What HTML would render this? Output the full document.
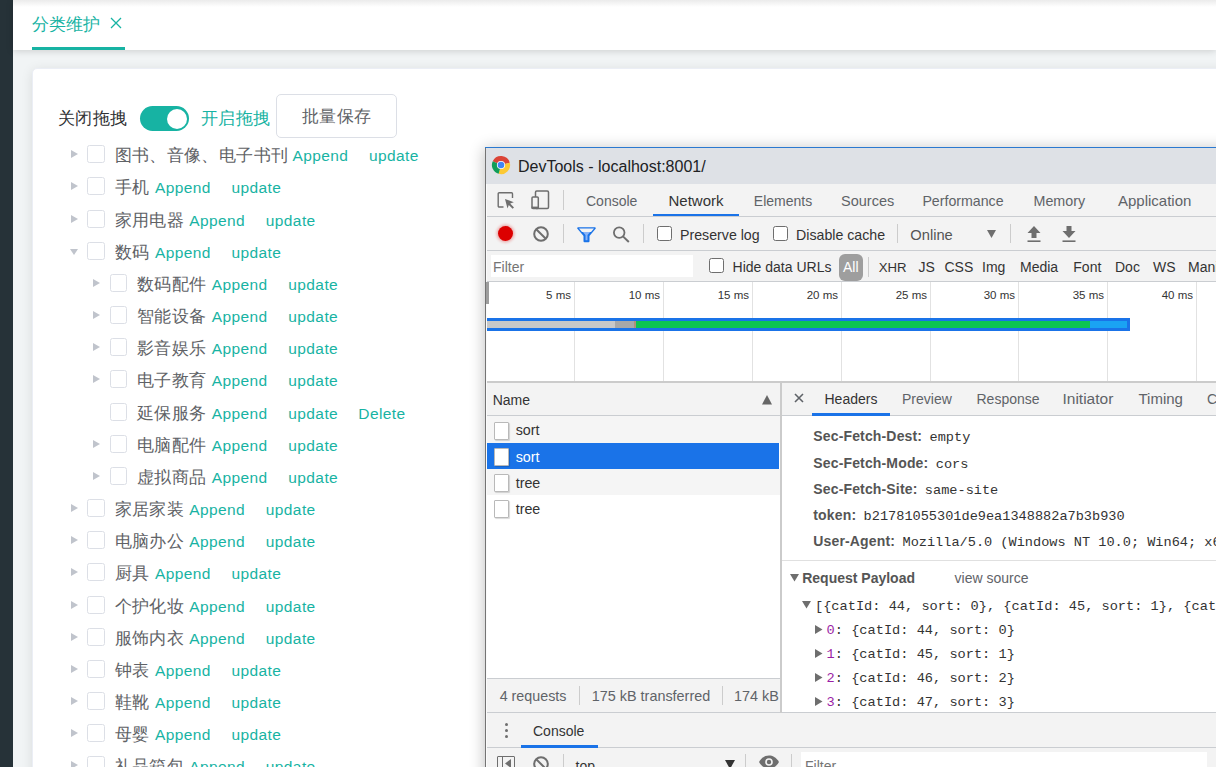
<!DOCTYPE html>
<html><head><meta charset="utf-8">
<style>
*{box-sizing:border-box}
html,body{margin:0;padding:0}
body{width:1216px;height:767px;overflow:hidden;position:relative;background:#f1f4f5;font-family:"Liberation Sans",sans-serif;}
.abs{position:absolute}
#side{position:absolute;left:0;top:0;width:13px;height:767px;background:#263238}
#top{position:absolute;left:13px;top:0;width:1203px;height:50px;background:#fff;box-shadow:0 1px 7px rgba(0,0,0,.16)}
#topsh{position:absolute;left:13px;top:0;width:1203px;height:7px;background:linear-gradient(#ebebeb,rgba(255,255,255,0))}
#tab{position:absolute;left:32px;top:13px;font-size:17px;color:#17b3a3;line-height:24px;white-space:nowrap}
#tabx{position:absolute;left:110px;top:17px;width:12px;height:12px}
#tabul{position:absolute;left:32px;top:47px;width:93px;height:3px;background:#17b3a3}
#card{position:absolute;left:32px;top:68px;width:1250px;height:760px;background:#fff;border:1px solid #ebeef5;border-radius:5px;box-shadow:0 2px 12px rgba(0,0,0,.1)}
.lbl{position:absolute;font-size:17px;letter-spacing:0.4px;line-height:24px;color:#606266;white-space:nowrap}
.lnk{position:absolute;font-size:15.5px;line-height:15.5px;letter-spacing:0.4px;color:#17b3a3;white-space:nowrap}
.cb{position:absolute;width:17.5px;height:17.5px;border:1px solid #dcdfe6;border-radius:2.5px;background:#fff}
.arr{position:absolute;width:0;height:0;border-left:7px solid #c0c4cc;border-top:4.5px solid transparent;border-bottom:4.5px solid transparent}
.arr.down{border-top:6px solid #c0c4cc;border-left:4.5px solid transparent;border-right:4.5px solid transparent;border-bottom:0}
#sw{position:absolute;left:140px;top:106px;width:49px;height:25px;border-radius:13px;background:#17b3a3}
#swk{position:absolute;left:167px;top:108.5px;width:20px;height:20px;border-radius:50%;background:#fff}
#btn{position:absolute;left:276px;top:94px;width:121px;height:44px;border:1px solid #dcdfe6;border-radius:5px;background:#fff}
/* devtools */
#dt{position:absolute;left:485px;top:147px;width:760px;height:640px;background:#fff;border-left:1px solid #8a8a8a;border-top:1px solid #1a73e8;box-shadow:0 0 18px rgba(0,0,0,.22)}
.t{position:absolute;white-space:nowrap}
.r{position:absolute}
.dtt{position:absolute;font-size:14.3px;line-height:18px;color:#333;white-space:nowrap}
</style></head><body>
<div id="side"></div>
<div id="top"></div>
<div id="topsh"></div>
<div id="tab">分类维护</div>
<svg id="tabx" viewBox="0 0 12 12"><path d="M1 1L11 11M11 1L1 11" stroke="#17b3a3" stroke-width="1.3"/></svg>
<div id="tabul"></div>
<div id="card"></div>
<div class="lbl" style="left:58px;top:107px;color:#303133">关闭拖拽</div>
<div id="sw"></div><div id="swk"></div>
<div class="lbl" style="left:201px;top:107px;color:#17b3a3">开启拖拽</div>
<div id="btn"></div>
<div class="lbl" style="left:302px;top:105px">批量保存</div>
<div class="arr" style="left:71px;top:150px"></div>
<div class="cb" style="left:87px;top:145px"></div>
<div class="lbl" style="left:114.5px;top:144px">图书、音像、电子书刊</div>
<div class="lnk" style="left:292.5px;top:147.7px">Append</div>
<div class="lnk" style="left:369.0px;top:147.7px">update</div>
<div class="arr" style="left:71px;top:182px"></div>
<div class="cb" style="left:87px;top:177px"></div>
<div class="lbl" style="left:114.5px;top:176px">手机</div>
<div class="lnk" style="left:154.9px;top:179.7px">Append</div>
<div class="lnk" style="left:231.4px;top:179.7px">update</div>
<div class="arr" style="left:71px;top:215px"></div>
<div class="cb" style="left:87px;top:210px"></div>
<div class="lbl" style="left:114.5px;top:209px">家用电器</div>
<div class="lnk" style="left:189.3px;top:212.7px">Append</div>
<div class="lnk" style="left:265.8px;top:212.7px">update</div>
<div class="arr down" style="left:69.5px;top:249px"></div>
<div class="cb" style="left:87px;top:242px"></div>
<div class="lbl" style="left:114.5px;top:241px">数码</div>
<div class="lnk" style="left:154.9px;top:244.7px">Append</div>
<div class="lnk" style="left:231.4px;top:244.7px">update</div>
<div class="arr" style="left:92.5px;top:279px"></div>
<div class="cb" style="left:109.5px;top:274px"></div>
<div class="lbl" style="left:137.0px;top:273px">数码配件</div>
<div class="lnk" style="left:211.8px;top:276.7px">Append</div>
<div class="lnk" style="left:288.3px;top:276.7px">update</div>
<div class="arr" style="left:92.5px;top:311px"></div>
<div class="cb" style="left:109.5px;top:306px"></div>
<div class="lbl" style="left:137.0px;top:305px">智能设备</div>
<div class="lnk" style="left:211.8px;top:308.7px">Append</div>
<div class="lnk" style="left:288.3px;top:308.7px">update</div>
<div class="arr" style="left:92.5px;top:343px"></div>
<div class="cb" style="left:109.5px;top:338px"></div>
<div class="lbl" style="left:137.0px;top:337px">影音娱乐</div>
<div class="lnk" style="left:211.8px;top:340.7px">Append</div>
<div class="lnk" style="left:288.3px;top:340.7px">update</div>
<div class="arr" style="left:92.5px;top:375px"></div>
<div class="cb" style="left:109.5px;top:370px"></div>
<div class="lbl" style="left:137.0px;top:369px">电子教育</div>
<div class="lnk" style="left:211.8px;top:372.7px">Append</div>
<div class="lnk" style="left:288.3px;top:372.7px">update</div>
<div class="cb" style="left:109.5px;top:403px"></div>
<div class="lbl" style="left:137.0px;top:402px">延保服务</div>
<div class="lnk" style="left:211.8px;top:405.7px">Append</div>
<div class="lnk" style="left:288.3px;top:405.7px">update</div>
<div class="lnk" style="left:358.3px;top:405.7px">Delete</div>
<div class="arr" style="left:92.5px;top:440px"></div>
<div class="cb" style="left:109.5px;top:435px"></div>
<div class="lbl" style="left:137.0px;top:434px">电脑配件</div>
<div class="lnk" style="left:211.8px;top:437.7px">Append</div>
<div class="lnk" style="left:288.3px;top:437.7px">update</div>
<div class="arr" style="left:92.5px;top:472px"></div>
<div class="cb" style="left:109.5px;top:467px"></div>
<div class="lbl" style="left:137.0px;top:466px">虚拟商品</div>
<div class="lnk" style="left:211.8px;top:469.7px">Append</div>
<div class="lnk" style="left:288.3px;top:469.7px">update</div>
<div class="arr" style="left:71px;top:504px"></div>
<div class="cb" style="left:87px;top:499px"></div>
<div class="lbl" style="left:114.5px;top:498px">家居家装</div>
<div class="lnk" style="left:189.3px;top:501.7px">Append</div>
<div class="lnk" style="left:265.8px;top:501.7px">update</div>
<div class="arr" style="left:71px;top:536px"></div>
<div class="cb" style="left:87px;top:531px"></div>
<div class="lbl" style="left:114.5px;top:530px">电脑办公</div>
<div class="lnk" style="left:189.3px;top:533.7px">Append</div>
<div class="lnk" style="left:265.8px;top:533.7px">update</div>
<div class="arr" style="left:71px;top:568px"></div>
<div class="cb" style="left:87px;top:563px"></div>
<div class="lbl" style="left:114.5px;top:562px">厨具</div>
<div class="lnk" style="left:154.9px;top:565.7px">Append</div>
<div class="lnk" style="left:231.4px;top:565.7px">update</div>
<div class="arr" style="left:71px;top:601px"></div>
<div class="cb" style="left:87px;top:596px"></div>
<div class="lbl" style="left:114.5px;top:595px">个护化妆</div>
<div class="lnk" style="left:189.3px;top:598.7px">Append</div>
<div class="lnk" style="left:265.8px;top:598.7px">update</div>
<div class="arr" style="left:71px;top:633px"></div>
<div class="cb" style="left:87px;top:628px"></div>
<div class="lbl" style="left:114.5px;top:627px">服饰内衣</div>
<div class="lnk" style="left:189.3px;top:630.7px">Append</div>
<div class="lnk" style="left:265.8px;top:630.7px">update</div>
<div class="arr" style="left:71px;top:665px"></div>
<div class="cb" style="left:87px;top:660px"></div>
<div class="lbl" style="left:114.5px;top:659px">钟表</div>
<div class="lnk" style="left:154.9px;top:662.7px">Append</div>
<div class="lnk" style="left:231.4px;top:662.7px">update</div>
<div class="arr" style="left:71px;top:697px"></div>
<div class="cb" style="left:87px;top:692px"></div>
<div class="lbl" style="left:114.5px;top:691px">鞋靴</div>
<div class="lnk" style="left:154.9px;top:694.7px">Append</div>
<div class="lnk" style="left:231.4px;top:694.7px">update</div>
<div class="arr" style="left:71px;top:729px"></div>
<div class="cb" style="left:87px;top:724px"></div>
<div class="lbl" style="left:114.5px;top:723px">母婴</div>
<div class="lnk" style="left:154.9px;top:726.7px">Append</div>
<div class="lnk" style="left:231.4px;top:726.7px">update</div>
<div class="arr" style="left:71px;top:761px"></div>
<div class="cb" style="left:87px;top:756px"></div>
<div class="lbl" style="left:114.5px;top:755px">礼品箱包</div>
<div class="lnk" style="left:189.3px;top:758.7px">Append</div>
<div class="lnk" style="left:265.8px;top:758.7px">update</div>
<div class="r" style="left:485px;top:147px;width:760px;height:640px;background:#fff;box-shadow:0 2px 14px 1px rgba(0,0,0,.24)"></div>
<div class="r" style="left:485px;top:147px;width:731px;height:1px;background:#2b79d0;"></div>
<div class="r" style="left:485px;top:148px;width:1px;height:619px;background:#747474;"></div>
<div class="r" style="left:486px;top:148px;width:730px;height:36px;background:#dee1e6;"></div>
<svg class="r" style="left:491px;top:155.3px" width="20" height="20" viewBox="0 0 20 20"><path d="M10 10L1.75 6.15A9.1 9.1 0 0 1 18.79 7.64Z" fill="#db4437"/><path d="M10 10L18.79 7.64A9.1 9.1 0 0 1 7.64 18.79Z" fill="#fcc934"/><path d="M10 10L7.64 18.79A9.1 9.1 0 0 1 1.75 6.15Z" fill="#109d58"/><circle cx="10" cy="10" r="4.1" fill="#fff"/><circle cx="10" cy="10" r="3.3" fill="#4285f4"/></svg>
<div class="t" style="left:518px;top:158.6px;font-size:16px;line-height:16px;color:#202124;font-weight:normal;font-family:'Liberation Sans',sans-serif;">DevTools - localhost:8001/</div>
<div class="r" style="left:486px;top:184px;width:730px;height:32px;background:#f3f3f3;"></div>
<div class="r" style="left:486px;top:216px;width:730px;height:1px;background:#cacdd1;"></div>
<svg class="r" style="left:497px;top:191px" width="19" height="19" viewBox="0 0 19 19">
<path d="M6.5 16H2.2a1 1 0 0 1-1-1V2.8a1 1 0 0 1 1-1h12.3a1 1 0 0 1 1 1V7" fill="none" stroke="#6e6e6e" stroke-width="1.4"/>
<path d="M8 8L16.8 11.2L13.2 12.6L17 16.4L15.6 17.8L11.8 14L10.5 17.5Z" fill="#6e6e6e"/>
</svg>
<svg class="r" style="left:530px;top:189px" width="21" height="22" viewBox="0 0 21 22">
<rect x="5.5" y="2" width="13" height="17.4" rx="1.2" fill="none" stroke="#6e6e6e" stroke-width="1.5"/>
<rect x="2" y="7.9" width="6.3" height="11.5" rx="1" fill="#f3f3f3" stroke="#6e6e6e" stroke-width="1.5"/>
<path d="M1.5 18.6H8.8" stroke="#6e6e6e" stroke-width="2"/>
</svg>
<div class="r" style="left:563px;top:190px;width:1px;height:20px;background:#ccc;"></div>
<div class="t" style="left:586px;top:194.1px;font-size:14px;line-height:14px;color:#5f6368;font-weight:normal;font-family:'Liberation Sans',sans-serif;">Console</div>
<div class="t" style="left:668.5px;top:193.3px;font-size:15px;line-height:15px;color:#333;font-weight:normal;font-family:'Liberation Sans',sans-serif;">Network</div>
<div class="t" style="left:753.8px;top:194.1px;font-size:14px;line-height:14px;color:#5f6368;font-weight:normal;font-family:'Liberation Sans',sans-serif;">Elements</div>
<div class="t" style="left:841px;top:193.7px;font-size:14.5px;line-height:14.5px;color:#5f6368;font-weight:normal;font-family:'Liberation Sans',sans-serif;">Sources</div>
<div class="t" style="left:922.4px;top:194.0px;font-size:14.2px;line-height:14.2px;color:#5f6368;font-weight:normal;font-family:'Liberation Sans',sans-serif;">Performance</div>
<div class="t" style="left:1033.5px;top:193.9px;font-size:14.3px;line-height:14.3px;color:#5f6368;font-weight:normal;font-family:'Liberation Sans',sans-serif;">Memory</div>
<div class="t" style="left:1118px;top:193.3px;font-size:15px;line-height:15px;color:#5f6368;font-weight:normal;font-family:'Liberation Sans',sans-serif;">Application</div>
<div class="r" style="left:653px;top:214px;width:86px;height:2px;background:#1a73e8;"></div>
<div class="r" style="left:486px;top:217px;width:730px;height:33px;background:#f3f3f3;"></div>
<div class="r" style="left:486px;top:250px;width:730px;height:1px;background:#cacdd1;"></div>
<div class="r" style="left:497.5px;top:225.5px;width:15px;height:15px;border-radius:50%;background:#dc0000;box-shadow:0 0 3px 1.5px rgba(220,0,0,.3)"></div>
<svg class="r" style="left:532px;top:225px" width="18" height="18" viewBox="0 0 18 18">
<circle cx="9" cy="9" r="6.8" fill="none" stroke="#6e6e6e" stroke-width="2"/>
<path d="M4.2 4.2L13.8 13.8" stroke="#6e6e6e" stroke-width="2"/>
</svg>
<div class="r" style="left:563px;top:224px;width:1px;height:19px;background:#ccc;"></div>
<svg class="r" style="left:577px;top:226.5px" width="19" height="16" viewBox="0 0 19 16">
<path d="M1.2 1.2H17.8L11.5 8.5V14.3H7.5V8.5Z" fill="#8ab4f8" stroke="#1a73e8" stroke-width="2" stroke-linejoin="round"/>
<path d="M2 1.5H17L14 5H5Z" fill="#f3f3f3"/>
</svg>
<svg class="r" style="left:612px;top:226px" width="18" height="17" viewBox="0 0 18 17">
<circle cx="7.2" cy="6.6" r="5.3" fill="none" stroke="#6e6e6e" stroke-width="1.8"/>
<path d="M11 10.4L16.8 16" stroke="#6e6e6e" stroke-width="2"/>
</svg>
<div class="r" style="left:643px;top:224px;width:1px;height:19px;background:#ccc;"></div>
<div class="r" style="left:657px;top:226px;width:15px;height:15px;border:1px solid #6e6e6e;border-radius:2.5px;background:#fff"></div>
<div class="t" style="left:680px;top:228.0px;font-size:14.2px;line-height:14.2px;color:#333;font-weight:normal;font-family:'Liberation Sans',sans-serif;">Preserve log</div>
<div class="r" style="left:773px;top:226px;width:15px;height:15px;border:1px solid #6e6e6e;border-radius:2.5px;background:#fff"></div>
<div class="t" style="left:796px;top:228.0px;font-size:14.2px;line-height:14.2px;color:#333;font-weight:normal;font-family:'Liberation Sans',sans-serif;">Disable cache</div>
<div class="r" style="left:897px;top:224px;width:1px;height:19px;background:#ccc;"></div>
<div class="t" style="left:910.3px;top:227.6px;font-size:14.7px;line-height:14.7px;color:#555;font-weight:normal;font-family:'Liberation Sans',sans-serif;">Online</div>
<svg class="r" style="left:986.5px;top:229.5px" width="9" height="8" viewBox="0 0 9 8"><path d="M0 0H9L4.5 8Z" fill="#6e6e6e"/></svg>
<div class="r" style="left:1010px;top:224px;width:1px;height:19px;background:#ccc;"></div>
<svg class="r" style="left:1026px;top:225px" width="16" height="18" viewBox="0 0 16 18">
<path d="M8 1L14.5 8H10.5V13H5.5V8H1.5Z" fill="#6e6e6e"/><path d="M1.5 16.2H14.5" stroke="#6e6e6e" stroke-width="1.6"/>
</svg>
<svg class="r" style="left:1061px;top:225px" width="16" height="18" viewBox="0 0 16 18">
<path d="M5.5 1H10.5V6H14.5L8 13L1.5 6H5.5Z" fill="#6e6e6e"/><path d="M1.5 16.2H14.5" stroke="#6e6e6e" stroke-width="1.6"/>
</svg>
<div class="r" style="left:486px;top:251px;width:730px;height:30px;background:#f3f3f3;"></div>
<div class="r" style="left:486px;top:281px;width:730px;height:1px;background:#cacdd1;"></div>
<div class="r" style="left:491px;top:255px;width:202px;height:22px;background:#fff;"></div>
<div class="t" style="left:493px;top:260.1px;font-size:14px;line-height:14px;color:#757575;font-weight:normal;font-family:'Liberation Sans',sans-serif;">Filter</div>
<div class="r" style="left:709px;top:258px;width:15px;height:15px;border:1px solid #6e6e6e;border-radius:2.5px;background:#fff"></div>
<div class="t" style="left:732.6px;top:260.1px;font-size:14px;line-height:14px;color:#333;font-weight:normal;font-family:'Liberation Sans',sans-serif;">Hide data URLs</div>
<div class="r" style="left:838.5px;top:254px;width:24px;height:27px;border-radius:6px;background:#9e9e9e"></div>
<div class="t" style="left:843px;top:260.1px;font-size:14px;line-height:14px;color:#fff;font-weight:normal;font-family:'Liberation Sans',sans-serif;">All</div>
<div class="r" style="left:868px;top:257px;width:1px;height:20px;background:#ccc;"></div>
<div class="t" style="left:878.7px;top:260.8px;font-size:13.2px;line-height:13.2px;color:#333;font-weight:normal;font-family:'Liberation Sans',sans-serif;">XHR</div>
<div class="t" style="left:918.4px;top:260.1px;font-size:14px;line-height:14px;color:#333;font-weight:normal;font-family:'Liberation Sans',sans-serif;">JS</div>
<div class="t" style="left:944.5px;top:260.1px;font-size:14px;line-height:14px;color:#333;font-weight:normal;font-family:'Liberation Sans',sans-serif;">CSS</div>
<div class="t" style="left:982px;top:260.1px;font-size:14px;line-height:14px;color:#333;font-weight:normal;font-family:'Liberation Sans',sans-serif;">Img</div>
<div class="t" style="left:1020px;top:260.1px;font-size:14px;line-height:14px;color:#333;font-weight:normal;font-family:'Liberation Sans',sans-serif;">Media</div>
<div class="t" style="left:1073.3px;top:260.1px;font-size:14px;line-height:14px;color:#333;font-weight:normal;font-family:'Liberation Sans',sans-serif;">Font</div>
<div class="t" style="left:1115px;top:260.1px;font-size:14px;line-height:14px;color:#333;font-weight:normal;font-family:'Liberation Sans',sans-serif;">Doc</div>
<div class="t" style="left:1153px;top:260.1px;font-size:14px;line-height:14px;color:#333;font-weight:normal;font-family:'Liberation Sans',sans-serif;">WS</div>
<div class="t" style="left:1188px;top:260.1px;font-size:14px;line-height:14px;color:#333;font-weight:normal;font-family:'Liberation Sans',sans-serif;">Manifest</div>
<div class="r" style="left:486px;top:282px;width:730px;height:99px;background:#fff;"></div>
<div class="r" style="left:574px;top:282px;width:1px;height:99px;background:#e2e2e2;"></div>
<div class="t" style="left:571px;top:290.3px;font-size:11.5px;line-height:11.5px;color:#333;font-weight:normal;font-family:'Liberation Sans',sans-serif;transform:translateX(-100%)">5 ms</div>
<div class="r" style="left:663px;top:282px;width:1px;height:99px;background:#e2e2e2;"></div>
<div class="t" style="left:660px;top:290.3px;font-size:11.5px;line-height:11.5px;color:#333;font-weight:normal;font-family:'Liberation Sans',sans-serif;transform:translateX(-100%)">10 ms</div>
<div class="r" style="left:752px;top:282px;width:1px;height:99px;background:#e2e2e2;"></div>
<div class="t" style="left:749px;top:290.3px;font-size:11.5px;line-height:11.5px;color:#333;font-weight:normal;font-family:'Liberation Sans',sans-serif;transform:translateX(-100%)">15 ms</div>
<div class="r" style="left:841px;top:282px;width:1px;height:99px;background:#e2e2e2;"></div>
<div class="t" style="left:838px;top:290.3px;font-size:11.5px;line-height:11.5px;color:#333;font-weight:normal;font-family:'Liberation Sans',sans-serif;transform:translateX(-100%)">20 ms</div>
<div class="r" style="left:930px;top:282px;width:1px;height:99px;background:#e2e2e2;"></div>
<div class="t" style="left:927px;top:290.3px;font-size:11.5px;line-height:11.5px;color:#333;font-weight:normal;font-family:'Liberation Sans',sans-serif;transform:translateX(-100%)">25 ms</div>
<div class="r" style="left:1018px;top:282px;width:1px;height:99px;background:#e2e2e2;"></div>
<div class="t" style="left:1015px;top:290.3px;font-size:11.5px;line-height:11.5px;color:#333;font-weight:normal;font-family:'Liberation Sans',sans-serif;transform:translateX(-100%)">30 ms</div>
<div class="r" style="left:1107px;top:282px;width:1px;height:99px;background:#e2e2e2;"></div>
<div class="t" style="left:1104px;top:290.3px;font-size:11.5px;line-height:11.5px;color:#333;font-weight:normal;font-family:'Liberation Sans',sans-serif;transform:translateX(-100%)">35 ms</div>
<div class="r" style="left:1196px;top:282px;width:1px;height:99px;background:#e2e2e2;"></div>
<div class="t" style="left:1193px;top:290.3px;font-size:11.5px;line-height:11.5px;color:#333;font-weight:normal;font-family:'Liberation Sans',sans-serif;transform:translateX(-100%)">40 ms</div>
<div class="r" style="left:486px;top:282px;width:3px;height:22px;background:#9d9d9d;"></div>
<div class="r" style="left:486px;top:318px;width:644px;height:13px;background:#1a73e8;"></div>
<div class="r" style="left:486px;top:321px;width:129px;height:7px;background:#c8c8c8;"></div>
<div class="r" style="left:615px;top:321px;width:19px;height:7px;background:#a8a8a8;"></div>
<div class="r" style="left:634px;top:321px;width:2px;height:7px;background:#b0907a;"></div>
<div class="r" style="left:636px;top:321px;width:454px;height:7px;background:#0cc451;"></div>
<div class="r" style="left:1090px;top:321px;width:37px;height:7px;background:#1aa3f3;"></div>
<div class="r" style="left:486px;top:381px;width:730px;height:2px;background:#cbcbcb;"></div>
<div class="r" style="left:486px;top:383px;width:294px;height:32px;background:#f3f3f3;"></div>
<div class="r" style="left:486px;top:415px;width:294px;height:1px;background:#cacdd1;"></div>
<div class="t" style="left:492.7px;top:393.1px;font-size:14px;line-height:14px;color:#333;font-weight:normal;font-family:'Liberation Sans',sans-serif;">Name</div>
<svg class="r" style="left:762px;top:394.5px" width="10" height="10" viewBox="0 0 10 10"><path d="M5 0L10 9.5H0Z" fill="#666"/></svg>
<div class="r" style="left:486px;top:416px;width:294px;height:27px;background:#f5f5f5;"></div>
<div class="r" style="left:486px;top:443px;width:293px;height:26px;background:#1a73e8;"></div>
<div class="r" style="left:486px;top:469px;width:294px;height:26px;background:#f5f5f5;"></div>
<div class="r" style="left:486px;top:495px;width:294px;height:184px;background:#fff;"></div>
<div class="r" style="left:494px;top:421.5px;width:15px;height:18px;border:1px solid #b9b9b9;border-radius:1px;background:#fff;box-shadow:1px 1px 1px rgba(0,0,0,.15)"></div>
<div class="t" style="left:515.7px;top:423.4px;font-size:14.3px;line-height:14.3px;color:#333;font-weight:normal;font-family:'Liberation Sans',sans-serif;">sort</div>
<div class="r" style="left:494px;top:447.7px;width:15px;height:18px;border:1px solid #b9b9b9;border-radius:1px;background:#fff;box-shadow:1px 1px 1px rgba(0,0,0,.15)"></div>
<div class="t" style="left:515.7px;top:449.6px;font-size:14.3px;line-height:14.3px;color:#fff;font-weight:normal;font-family:'Liberation Sans',sans-serif;">sort</div>
<div class="r" style="left:494px;top:473.9px;width:15px;height:18px;border:1px solid #b9b9b9;border-radius:1px;background:#fff;box-shadow:1px 1px 1px rgba(0,0,0,.15)"></div>
<div class="t" style="left:515.7px;top:475.8px;font-size:14.3px;line-height:14.3px;color:#333;font-weight:normal;font-family:'Liberation Sans',sans-serif;">tree</div>
<div class="r" style="left:494px;top:500.1px;width:15px;height:18px;border:1px solid #b9b9b9;border-radius:1px;background:#fff;box-shadow:1px 1px 1px rgba(0,0,0,.15)"></div>
<div class="t" style="left:515.7px;top:502.0px;font-size:14.3px;line-height:14.3px;color:#333;font-weight:normal;font-family:'Liberation Sans',sans-serif;">tree</div>
<div class="r" style="left:486px;top:678px;width:294px;height:1px;background:#cacdd1;"></div>
<div class="r" style="left:486px;top:679px;width:294px;height:33px;background:#f3f3f3;"></div>
<div class="r" style="left:486px;top:712px;width:294px;height:1px;background:#cacdd1;"></div>
<div class="t" style="left:499.7px;top:688.9px;font-size:14.3px;line-height:14.3px;color:#5f6368;font-weight:normal;font-family:'Liberation Sans',sans-serif;">4 requests</div>
<div class="r" style="left:579px;top:686px;width:1px;height:19px;background:#ccc;"></div>
<div class="t" style="left:591.8px;top:688.8px;font-size:14.4px;line-height:14.4px;color:#5f6368;font-weight:normal;font-family:'Liberation Sans',sans-serif;">175 kB transferred</div>
<div class="r" style="left:722px;top:686px;width:1px;height:19px;background:#ccc;"></div>
<div class="t" style="left:734px;top:688.8px;font-size:14.4px;line-height:14.4px;color:#5f6368;font-weight:normal;font-family:'Liberation Sans',sans-serif;">174 kB</div>
<div class="r" style="left:780px;top:383px;width:2px;height:330px;background:#cbcbcb;"></div>
<div class="r" style="left:782px;top:383px;width:434px;height:32px;background:#f3f3f3;"></div>
<div class="r" style="left:782px;top:415px;width:434px;height:1px;background:#cacdd1;"></div>
<svg class="r" style="left:793.5px;top:393px" width="10" height="10" viewBox="0 0 10 10"><path d="M1 1L9 9M9 1L1 9" stroke="#5f6368" stroke-width="1.6"/></svg>
<div class="t" style="left:824.5px;top:392.1px;font-size:14px;line-height:14px;color:#333;font-weight:normal;font-family:'Liberation Sans',sans-serif;">Headers</div>
<div class="t" style="left:902px;top:392.1px;font-size:14px;line-height:14px;color:#5f6368;font-weight:normal;font-family:'Liberation Sans',sans-serif;">Preview</div>
<div class="t" style="left:976.5px;top:392.1px;font-size:14px;line-height:14px;color:#5f6368;font-weight:normal;font-family:'Liberation Sans',sans-serif;">Response</div>
<div class="t" style="left:1062.5px;top:390.9px;font-size:15.5px;line-height:15.5px;color:#5f6368;font-weight:normal;font-family:'Liberation Sans',sans-serif;">Initiator</div>
<div class="t" style="left:1138.5px;top:391.3px;font-size:15px;line-height:15px;color:#5f6368;font-weight:normal;font-family:'Liberation Sans',sans-serif;">Timing</div>
<div class="t" style="left:1207px;top:392.1px;font-size:14px;line-height:14px;color:#5f6368;font-weight:normal;font-family:'Liberation Sans',sans-serif;">Cookies</div>
<div class="r" style="left:812px;top:413px;width:78px;height:3px;background:#1a73e8;"></div>
<div class="r" style="left:782px;top:416px;width:434px;height:297px;background:#fff;"></div>
<div class="t" style="left:813.3px;top:428.0px;font-size:14px;line-height:16px;color:#333;white-space:nowrap"><b style="color:#555;letter-spacing:0.15px">Sec-Fetch-Dest:</b> <span style="font-family:'Liberation Mono',monospace;font-size:13.6px;color:#333;margin-left:3.5px">empty</span></div>
<div class="t" style="left:813.3px;top:454.5px;font-size:14px;line-height:16px;color:#333;white-space:nowrap"><b style="color:#555;letter-spacing:0.15px">Sec-Fetch-Mode:</b> <span style="font-family:'Liberation Mono',monospace;font-size:13.6px;color:#333;margin-left:3.5px">cors</span></div>
<div class="t" style="left:813.3px;top:480.5px;font-size:14px;line-height:16px;color:#333;white-space:nowrap"><b style="color:#555;letter-spacing:0.15px">Sec-Fetch-Site:</b> <span style="font-family:'Liberation Mono',monospace;font-size:13.6px;color:#333;margin-left:3.5px">same-site</span></div>
<div class="t" style="left:813.3px;top:506.5px;font-size:14px;line-height:16px;color:#333;white-space:nowrap"><b style="color:#555;letter-spacing:0.15px">token:</b> <span style="font-family:'Liberation Mono',monospace;font-size:13.6px;color:#333;margin-left:3.5px">b21781055301de9ea1348882a7b3b930</span></div>
<div class="t" style="left:813.3px;top:532.5px;font-size:14px;line-height:16px;color:#333;white-space:nowrap"><b style="color:#555;letter-spacing:0.15px">User-Agent:</b> <span style="font-family:'Liberation Mono',monospace;font-size:13.6px;color:#333;margin-left:3.5px">Mozilla/5.0 (Windows NT 10.0; Win64; x64) AppleWebKit</span></div>
<div class="r" style="left:782px;top:560px;width:434px;height:1px;background:#e0e0e0;"></div>
<svg class="r" style="left:789.5px;top:574px" width="9" height="8" viewBox="0 0 9 8"><path d="M0 0H9L4.5 7.5Z" fill="#6e6e6e"/></svg>
<div class="t" style="left:802.2px;top:571.1px;font-size:14px;line-height:14px;color:#555;font-weight:normal;font-family:'Liberation Sans',sans-serif;"><b>Request Payload</b></div>
<div class="t" style="left:954.6px;top:571.1px;font-size:14px;line-height:14px;color:#5f6368;font-weight:normal;font-family:'Liberation Sans',sans-serif;">view source</div>
<svg class="r" style="left:801.5px;top:601px" width="9" height="8" viewBox="0 0 9 8"><path d="M0 0H9L4.5 7.5Z" fill="#6e6e6e"/></svg>
<div class="t" style="left:815px;top:600.4px;font-size:13.65px;line-height:13.65px;color:#333;font-weight:normal;font-family:'Liberation Mono',monospace;">[{catId: 44, sort: 0}, {catId: 45, sort: 1}, {catId: 46, sort: 2}]</div>
<svg class="r" style="left:815px;top:624.5px" width="8" height="9" viewBox="0 0 8 9"><path d="M0 0L7.5 4.5L0 9Z" fill="#6e6e6e"/></svg>
<div class="t" style="left:826.6px;top:624.4px;font-size:13.65px;line-height:13.65px;color:#333;font-weight:normal;font-family:'Liberation Mono',monospace;"><span style="color:#9b1fa6">0</span>: {catId: 44, sort: 0}</div>
<svg class="r" style="left:815px;top:648.5px" width="8" height="9" viewBox="0 0 8 9"><path d="M0 0L7.5 4.5L0 9Z" fill="#6e6e6e"/></svg>
<div class="t" style="left:826.6px;top:648.4px;font-size:13.65px;line-height:13.65px;color:#333;font-weight:normal;font-family:'Liberation Mono',monospace;"><span style="color:#9b1fa6">1</span>: {catId: 45, sort: 1}</div>
<svg class="r" style="left:815px;top:672.5px" width="8" height="9" viewBox="0 0 8 9"><path d="M0 0L7.5 4.5L0 9Z" fill="#6e6e6e"/></svg>
<div class="t" style="left:826.6px;top:672.4px;font-size:13.65px;line-height:13.65px;color:#333;font-weight:normal;font-family:'Liberation Mono',monospace;"><span style="color:#9b1fa6">2</span>: {catId: 46, sort: 2}</div>
<svg class="r" style="left:815px;top:696.5px" width="8" height="9" viewBox="0 0 8 9"><path d="M0 0L7.5 4.5L0 9Z" fill="#6e6e6e"/></svg>
<div class="t" style="left:826.6px;top:696.4px;font-size:13.65px;line-height:13.65px;color:#333;font-weight:normal;font-family:'Liberation Mono',monospace;"><span style="color:#9b1fa6">3</span>: {catId: 47, sort: 3}</div>
<div class="r" style="left:486px;top:713px;width:730px;height:34px;background:#f3f3f3;"></div>
<div class="r" style="left:782px;top:712px;width:434px;height:1px;background:#cacdd1;"></div>
<div class="r" style="left:486px;top:747px;width:730px;height:1px;background:#cacdd1;"></div>
<div class="r" style="left:504.5px;top:723.0px;width:3px;height:3px;border-radius:50%;background:#6e6e6e"></div>
<div class="r" style="left:504.5px;top:729.0px;width:3px;height:3px;border-radius:50%;background:#6e6e6e"></div>
<div class="r" style="left:504.5px;top:735.0px;width:3px;height:3px;border-radius:50%;background:#6e6e6e"></div>
<div class="t" style="left:533px;top:724.1px;font-size:14px;line-height:14px;color:#333;font-weight:normal;font-family:'Liberation Sans',sans-serif;">Console</div>
<div class="r" style="left:521px;top:745px;width:77px;height:2.5px;background:#1a73e8;"></div>
<div class="r" style="left:486px;top:748px;width:730px;height:19px;background:#f3f3f3;"></div>
<div class="r" style="left:497px;top:756px;width:18px;height:16px;border:1.6px solid #6e6e6e;border-radius:1px"></div>
<div class="r" style="left:501.5px;top:756px;width:1.6px;height:16px;background:#6e6e6e"></div>
<svg class="r" style="left:504px;top:759px" width="8" height="9" viewBox="0 0 8 9"><path d="M7 0V9L1 4.5Z" fill="#6e6e6e"/></svg>
<svg class="r" style="left:532px;top:755px" width="18" height="18" viewBox="0 0 18 18">
<circle cx="9" cy="9" r="6.8" fill="none" stroke="#6e6e6e" stroke-width="2"/>
<path d="M4.2 4.2L13.8 13.8" stroke="#6e6e6e" stroke-width="2"/>
</svg>
<div class="r" style="left:563px;top:754px;width:1px;height:13px;background:#ccc;"></div>
<div class="t" style="left:575.5px;top:759.1px;font-size:14px;line-height:14px;color:#333;font-weight:normal;font-family:'Liberation Sans',sans-serif;">top</div>
<svg class="r" style="left:725px;top:760px" width="10" height="9" viewBox="0 0 10 9"><path d="M0 0H10L5 9Z" fill="#333"/></svg>
<div class="r" style="left:745px;top:754px;width:1px;height:13px;background:#ccc;"></div>
<svg class="r" style="left:758px;top:755px" width="22" height="14" viewBox="0 0 22 14">
<path d="M1 7C4 2 7.5 0.5 11 0.5S18 2 21 7C18 12 14.5 13.5 11 13.5S4 12 1 7Z" fill="#6e6e6e"/>
<circle cx="11" cy="7" r="3.8" fill="#f3f3f3"/><circle cx="11" cy="7" r="2.2" fill="#6e6e6e"/>
</svg>
<div class="r" style="left:791px;top:754px;width:1px;height:13px;background:#ccc;"></div>
<div class="r" style="left:801px;top:752px;width:406px;height:15px;background:#fff;"></div>
<div class="t" style="left:805px;top:759.1px;font-size:14px;line-height:14px;color:#757575;font-weight:normal;font-family:'Liberation Sans',sans-serif;">Filter</div>
<div class="r" style="left:486px;top:184px;width:1px;height:583px;background:#fbfbfb;"></div>
<div class="r" style="left:486px;top:282px;width:3px;height:22px;background:#9d9d9d;"></div>
</body></html>
